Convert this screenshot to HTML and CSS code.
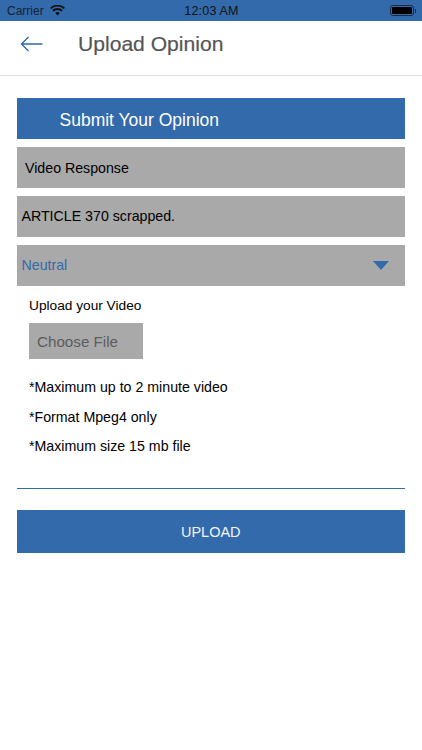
FILE: index.html
```html
<!DOCTYPE html>
<html lang="en">
<head>
<meta charset="utf-8">
<title>Upload Opinion</title>
<link rel="stylesheet" href="styles.css">
</head>
<body>
<div class="status">
  <div class="status-left">
    <span>Carrier</span>
    <svg class="wifi" viewBox="0 0 15 11" width="15" height="11"><path d="M7.5 10.600 5.200 8.100a3.400 3.400 0 0 1 4.600 0zM3.600 6.500 2.200 5a7.900 7.900 0 0 1 10.600 0l-1.400 1.500a5.800 5.800 0 0 0-7.800 0zM1.300 4 0 2.700a11 11 0 0 1 15 0L13.700 4a9.100 9.100 0 0 0-12.400 0z" fill="#111"/></svg>
  </div>
  <div class="status-time">12:03 AM</div>
  <div class="status-right">
    <span class="battery"><span class="battery-fill"></span></span><span class="battery-tip"></span>
  </div>
</div>
<header class="nav">
  <svg class="back" viewBox="0 0 23 16" width="23" height="16"><path d="M22.500 8H1.500M8.500 1 1.500 8l7 7" fill="none" stroke="#336aab" stroke-width="1.400"/></svg>
  <h1 class="title">Upload Opinion</h1>
</header>
<main class="form">
  <div class="banner">Submit Your Opinion</div>
  <div class="field field-type">Video Response</div>
  <div class="field">ARTICLE 370 scrapped.</div>
  <div class="field field-select">
    <span>Neutral</span>
    <svg class="caret" viewBox="0 0 16 9" width="16" height="9"><path d="M0 0h16L8 9z" fill="#336aab"/></svg>
  </div>
  <section class="upload">
    <div class="upload-label">Upload your Video</div>
    <div class="choose">Choose File</div>
    <p class="note">*Maximum up to 2 minute video</p>
    <p class="note">*Format Mpeg4 only</p>
    <p class="note">*Maximum size 15 mb file</p>
  </section>
  <div class="rule"></div>
  <div class="submit">UPLOAD</div>
</main>
</body>
</html>
```
FILE: styles.css
```css
* { box-sizing: border-box; }
html, body { margin: 0; padding: 0; background: #fff; }
body {
  width: 422px;
  height: 750px;
  overflow: hidden;
  font-family: "Liberation Sans", Arial, sans-serif;
  color: #000;
}
.status {
  height: 20.500px;
  background: #336aab;
  display: grid;
  grid-template-columns: 1fr auto 1fr;
  align-items: center;
  padding: 1px 6px 0 7px;
  font-size: 12px;
  color: #16202e;
}
.status-left { display: flex; align-items: center; gap: 6px; }
.wifi { display: block; }
.status-time { font-size: 12.500px; font-weight: 400; letter-spacing: 0.2px; color: #111; }
.status-right { display: flex; justify-content: flex-end; align-items: center; }
.battery {
  width: 24px;
  height: 11px;
  border: 1px solid #1b2a40;
  border-radius: 3px;
  padding: 1px;
  display: flex;
}
.battery-fill { flex: 1; background: #000; border-radius: 1px; }
.battery-tip { width: 1.500px; height: 4px; background: #1b2a40; margin-left: 1px; }
.nav {
  height: 55.500px;
  border-bottom: 1px solid #dedede;
  display: flex;
  align-items: center;
  padding: 0 0 7px 20px;
}
.back { display: block; }
.title {
  margin: 0 0 0 35px;
  font-size: 21.100px;
  font-weight: 400;
  color: #555;
  -webkit-text-stroke: 0.2px #555;
}
.form {
  padding: 22px 17px 0 16.500px;
  display: flex;
  flex-direction: column;
}
.banner {
  height: 40.500px;
  background: #336aab;
  color: #fff;
  font-size: 17.500px;
  line-height: 44.500px;
  padding-left: 43px;
}
.field {
  height: 40.500px;
  margin-top: 8.500px;
  background: #a9a9a9;
  font-size: 14.200px;
  padding-left: 5px;
  display: flex;
  align-items: center;
  justify-content: space-between;
}
.field-type { padding: 1.500px 0 0 8.500px; }
.field-select { color: #336aab; padding-right: 16px; }
.caret { display: block; }
.upload { padding: 12px 0 0 12.500px; }
.upload-label { font-size: 13.700px; line-height: 16px; }
.choose {
  width: 114px;
  height: 36.500px;
  margin-top: 9px;
  margin-bottom: 20px;
  background: #a9a9a9;
  color: #5c5c5c;
  font-size: 15.200px;
  line-height: 37px;
  padding-left: 8px;
}
.note {
  margin: 0 0 12.500px;
  font-size: 14.200px;
  line-height: 17px;
}
.rule { height: 1px; margin-top: 20.500px; background: #336aab; }
.submit {
  height: 43px;
  margin-top: 21px;
  background: #336aab;
  color: #f2f5fa;
  font-size: 14.500px;
  line-height: 44.500px;
  text-align: center;
}
```
